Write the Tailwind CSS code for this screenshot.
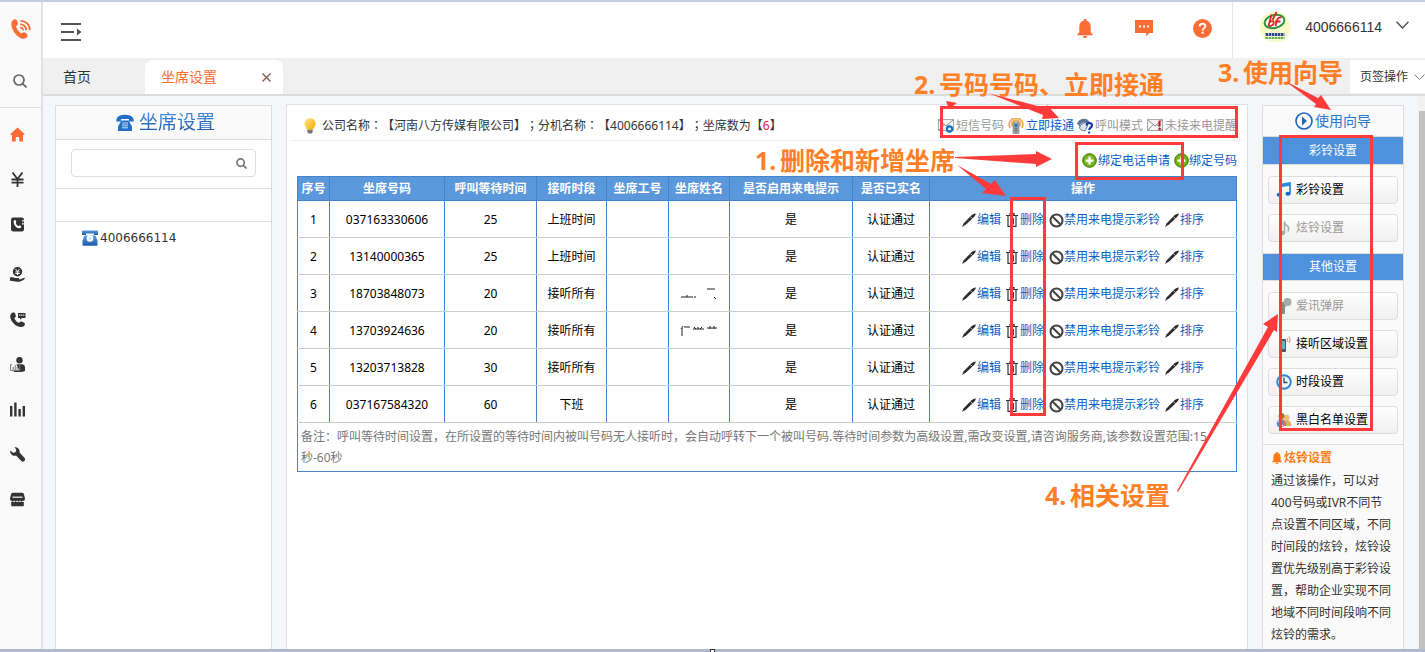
<!DOCTYPE html>
<html lang="zh-CN">
<head>
<meta charset="utf-8">
<title>坐席设置</title>
<script src="https://cdn.jsdelivr.net/npm/@tailwindcss/browser@4"></script>
</head>
<body class="relative flex h-screen flex-col overflow-hidden bg-[#f5f6fa] font-['Noto_Sans','Noto_Sans_CJK_SC',sans-serif] text-xs text-[#333] [text-spacing-trim:space-all]">
<svg class="absolute h-0 w-0" aria-hidden="true">
  <defs>
    <linearGradient id="bulbg" x1="0" y1="0" x2="1" y2="1"><stop offset="0" stop-color="#ffe98a"/><stop offset="1" stop-color="#f6a800"/></linearGradient>
    <linearGradient id="blueg" x1="0" y1="0" x2="0" y2="1"><stop offset="0" stop-color="#5a9be0"/><stop offset="1" stop-color="#1c59ab"/></linearGradient>
    <radialGradient id="greeng"><stop offset="0" stop-color="#a6d93a"/><stop offset="1" stop-color="#5ea30b"/></radialGradient>
  </defs>
  <symbol id="pen" viewBox="0 0 14 14"><path d="M0 14 1.500 10.500 9.500 2.300Q12 .2 13.800.4 13.800 2 12 4L4 11.500Z" fill="#2b2b2b"/><path d="M8.500 3.700l1.800 1.800" stroke="#fff" stroke-width=".8"/></symbol>
  <symbol id="trash" viewBox="0 0 12 14"><path d="M0 2.500h12M4 2V.7h4V2M2 3v10.300h8V3M4.700 5v6.500M7.300 5v6.500" fill="none" stroke="#333" stroke-width="1.200"/></symbol>
  <symbol id="ban" viewBox="0 0 16 16"><circle cx="8" cy="8" r="6.400" fill="none" stroke="#444" stroke-width="2.200"/><path d="M3.700 3.700l8.600 8.600" stroke="#444" stroke-width="2.200"/></symbol>
  <symbol id="plus" viewBox="0 0 16 16"><circle cx="8" cy="8" r="7.300" fill="url(#greeng)" stroke="#3f7a08"/><path d="M8 3.800v8.400M3.800 8h8.400" stroke="#fff" stroke-width="2.400"/></symbol>
  <symbol id="mail" viewBox="0 0 16 14"><rect x=".5" y="1.500" width="15" height="11" fill="#f4f4f4" stroke="#a9a9a9"/><path d="M1 2l7 6 7-6M1 12l5-5.300M15 12l-5-5.300" fill="none" stroke="#8d8d8d"/></symbol>
  <symbol id="bell" viewBox="0 0 16 20"><path d="M8 0a1.600 1.600 0 0 1 1.600 1.800C12.300 2.500 14 4.800 14 8v6l2 2v1H0v-1l2-2V8c0-3.200 1.700-5.500 4.400-6.200A1.600 1.600 0 0 1 8 0zM5.500 18h5a2.500 2 0 0 1-5 0z"/></symbol>
</svg>

<div class="h-[2px] shrink-0 bg-[#c5cde0]"></div>

<div class="flex min-h-0 flex-1">
  <nav class="flex w-[43px] shrink-0 flex-col border-r-2 border-[#e1e1e1] bg-[#fafafa] text-[#333]" aria-label="主菜单">
    <a href="#" aria-label="首页标志" class="flex h-[54px] items-center pl-[11px]">
      <svg class="h-5 w-5 text-[#fc6c35]" viewBox="0 0 20 20" fill="currentColor"><path d="M3 .6C4.500 0 5.800.5 6.200 2l.6 2.300c.2 1-.2 1.700-1 2.200-.7.500-.7 1.200-.3 2.200 1 2.200 2.300 3.900 4 5.200.8.600 1.400.5 2-.1.700-.7 1.600-.9 2.400-.3l2 1.500c1 .8 1 2 .2 3-1.400 1.900-3.900 2.300-6.600.9C5.300 16.700 1.900 12.600.6 7.200-.1 4 .600 1.600 3 .6z"/><path d="M9 8.600A2.500 2.500 0 0 1 12 11.500M9.300 5.300A5.700 5.700 0 0 1 15.200 11.300M9.500 1.800A9 9 0 0 1 18.700 11.100" fill="none" stroke="currentColor" stroke-width="1.800"/></svg>
    </a>
    <a href="#" aria-label="搜索" class="flex h-[52px] items-center border-b border-[#ddd] pb-[2px] pl-[13px]">
      <svg class="h-[14px] w-[14px]" viewBox="0 0 14 14" fill="none" stroke="#666" stroke-width="1.700"><circle cx="6" cy="6" r="5"/><path d="M9.600 9.600 13.500 13.500"/></svg>
    </a>
    <div class="flex flex-col pt-1 *:flex *:h-[45px] *:items-center *:pl-[10px]">
      <a href="#" aria-label="主页"><svg class="h-[15px] w-[15px]" viewBox="0 0 15 15" fill="#fc6c35"><path d="M7.500.5 14.500 7v1H13v6.500H9.200V10H5.800v4.500H2V8H.5V7z"/></svg></a>
      <a href="#" aria-label="费用"><svg class="h-[15px] w-[15px]" viewBox="0 0 15 15" fill="none" stroke="#333" stroke-width="1.800"><path d="M2.500.5 7.500 7l5-6.500M7.500 7v8M1.500 7.500h12M1.500 10.700h12"/></svg></a>
      <a href="#" aria-label="电话簿"><svg class="h-[15px] w-[15px]" viewBox="0 0 15 15"><rect x="1" y=".5" width="13" height="14" rx="2.200" fill="#333"/><path d="M4.300 3.200c1-.8 1.700.2 1.900 1.200.2.800-.7 1-.4 1.800.5 1.300 1.300 2.200 2.300 2.700.8.300 1-.6 1.800-.3 1 .4 1.800 1 1 1.900-1.300 1.500-4 .7-5.700-1.500C3.700 7.100 3 4.300 4.300 3.200z" fill="#fff"/><path d="M12 3.800h3M12 6.800h3" stroke="#fafafa" stroke-width="1.200"/></svg></a>
      <a href="#" aria-label="收款" class="mt-[5px]"><svg class="h-[15px] w-[15px]" viewBox="0 0 15 15"><circle cx="7.500" cy="4.800" r="4.700" fill="#333"/><path d="M5.500 2l2 2.500 2-2.500M7.500 4.500v3.600M5.300 4.900h4.400M5.300 6.500h4.400" stroke="#fafafa" fill="none"/><path d="M0 10.600c2-.6 3.500-.3 5 .4h3.500c.9 0 .9 1.200 0 1.200l2 .1 3.500-1.500c1-.2 1.200.6.500 1.100-2 1.600-4 2.900-7 2.900-3 0-4-.9-7.500-1z" fill="#333"/></svg></a>
      <a href="#" aria-label="通话"><svg class="h-4 w-4" viewBox="0 0 16 16" fill="#333"><path d="M3 .5c1.200-.4 2 .2 2.300 1.500l.5 1.700c.2.900-.2 1.400-.8 1.900-.5.400-.5.800-.1 1.600.8 1.500 1.800 2.600 3.200 3.400.7.400 1.100.3 1.500-.3.600-.8 1.300-1 2-.7l2.200 1c1.200.5 1.400 1.600.8 2.700-1 1.600-3 2.200-5.300 1.500C4.600 13.300 1.300 10 .4 5.400-.1 3 .8 1.200 3 .5z"/><path d="M8 1h7.500v5H12l-2 1.800V6H8z"/><path d="M9.200 3.200h5.200" stroke="#fff" stroke-width="1.200" stroke-dasharray="1.200 .8"/></svg></a>
      <a href="#" aria-label="客户"><svg class="h-[15px] w-[15px]" viewBox="0 0 15 15"><circle cx="9.500" cy="3.300" r="3.200" fill="#333"/><path d="M6.500 7.200h6q2.500.3 2.500 3V14q-2 1-5 1z" fill="#333"/><path d="M.6 7.700h1.500M.6 7.500v6h9.200V7.500H8.300M3.200 13V10M5.200 13V8M7.200 13V9.500" fill="none" stroke="#777"/><path d="M4 14.500h6" stroke="#333"/></svg></a>
      <a href="#" aria-label="统计"><svg class="h-[15px] w-[15px]" viewBox="0 0 15 15" fill="#333"><path d="M0 4h2.400v10.500H0zM4.200.5h2.400v14H4.200zM8.400 7h2.400v7.500H8.400zM12.600 4H15v10.500h-2.400z"/></svg></a>
      <a href="#" aria-label="工具"><svg class="h-[15px] w-[15px]" viewBox="0 0 15 15" fill="#333"><path d="M4.500.2C7.500-.3 10 2 9.600 5.500l5 5.500c1.500 2-1 4.700-3 3.200L6 8.600C3 9.600-.3 7 .2 3.500L3.300 6 6 4.800 6.200 2.500z"/></svg></a>
      <a href="#" aria-label="店铺"><svg class="h-[15px] w-[15px]" viewBox="0 0 15 15" fill="#333"><path d="M3 .8h9q1.500 0 1.900 1.400L15 6.500q0 2-1.500 2.500H1.500Q0 8.500 0 6.500L1.100 2.200Q1.500.8 3 .8z"/><path d="M2.500 5.200h10" stroke="#ddd" stroke-width="1.400"/><path d="M1.200 9.800q1.600-1 3.100 0 1.600-1 3.200 0 1.600-1 3.200 0 1.500-1 3.100 0v3.700q0 .8-.8.800H2q-.8 0-.8-.8z"/><path d="M0 9.300h15" stroke="#fafafa" stroke-width=".8" stroke-dasharray="2 1"/></svg></a>
    </div>
  </nav>

  <div class="flex min-w-0 flex-1 flex-col">
    <header class="flex h-[56px] shrink-0 items-center bg-white">
      <button type="button" aria-label="折叠菜单" class="ml-[18px] mt-1"><svg class="h-[18px] w-[21px]" viewBox="0 0 21 18"><path d="M0 1h20M0 9h13M0 17h20" stroke="#555" stroke-width="2"/><path d="M16 5.500 20.500 9 16 12.500z" fill="#555"/></svg></button>
      <div class="ml-auto flex items-center pb-1 text-[#fc6c35]">
        <button type="button" aria-label="通知" class="mr-[42px]"><svg class="h-[19px] w-4" fill="currentColor"><use href="#bell"/></svg></button>
        <button type="button" aria-label="消息" class="mr-[40px]"><svg class="h-[18px] w-[18px]" viewBox="0 0 18 18" fill="currentColor"><path d="M0 1h18v13h-3.500l-3.300 3.500V14H0z"/><path d="M4 7.500h2M8 7.500h2M12 7.500h2" stroke="#fff" stroke-width="2"/></svg></button>
        <button type="button" aria-label="帮助" class="mr-5"><svg class="h-[19px] w-[19px]" viewBox="0 0 19 19"><circle cx="9.500" cy="9.500" r="9.400" fill="currentColor"/><path d="M6.700 7.400c0-3.600 5.700-3.500 5.700-.3 0 2.100-2.800 2.100-2.800 4.300" fill="none" stroke="#fff" stroke-width="1.900"/><path d="M8.600 12.700h2v2h-2z" fill="#fff"/></svg></button>
      </div>
      <button type="button" class="flex h-full items-center border-l border-[#e8e8e8] pb-[6px] pl-[26px] pr-4 font-['Liberation_Sans',sans-serif] text-sm text-[#333]">
        <svg class="h-8 w-8" viewBox="0 0 32 32" aria-hidden="true"><circle cx="16" cy="16" r="15.500" fill="#fafac8"/><ellipse cx="15.500" cy="10.500" rx="10" ry="6.500" transform="rotate(-14 15.500 10.500)" fill="#fff" stroke="#2e9445" stroke-width="2"/><path d="M12.500 3.500 9.500 15M10.500 11.500c4-3 5.500 0 3 2.500-1.500 1.600-4 1.200-4 0M22.500 6.500c-4-.5-4.500 2-6 8.500M16 10.500h5.500M17.500 1 13.500 9" fill="none" stroke="#d9291c" stroke-width="1.800"/><path d="M6.500 23.500h19" stroke="#264b94" stroke-width="3" stroke-dasharray="2.500 .6"/><path d="M6.500 27h19" stroke="#5fae5c" stroke-width="2" stroke-dasharray="2.500 .6"/></svg>
        <span class="ml-[14px]">4006666114</span>
        <svg class="mb-1 ml-[14px] h-2 w-[13px]" viewBox="0 0 13 8" fill="none" stroke="#555" stroke-width="1.500"><path d="M.5.8 6.500 7 12.500.8"/></svg>
      </button>
    </header>

    <div class="flex h-[38px] shrink-0 items-stretch border-b-2 border-[#dcdcdc] bg-[#f0f0f0] pt-[2px] text-sm">
      <a href="#" class="flex w-[102px] items-center pl-5">首页</a>
      <div class="flex w-[138px] items-center justify-between rounded-t-lg bg-white pl-4 pr-3 text-[#fc6c35]">
        <a href="#" aria-current="page">坐席设置</a>
        <button type="button" aria-label="关闭"><svg class="h-[9px] w-[9px]" viewBox="0 0 9 9" stroke="#8a5a50" stroke-width="1.400"><path d="M.5.5l8 8M8.500.5l-8 8"/></svg></button>
      </div>
      <button type="button" class="mb-px ml-auto flex items-center whitespace-nowrap bg-white pl-[10px] text-xs">页签操作<svg class="ml-[6px] h-[6px] w-[11px]" viewBox="0 0 11 6" fill="none" stroke="#777"><path d="M.5.500 5.500 5.500 10.500.5"/></svg></button>
    </div>

    <div class="flex min-h-0 flex-1">
      <aside class="ml-3 mt-[9px] w-[217px] shrink-0 border border-b-0 border-[#ddd] bg-white">
        <h2 class="flex h-[34px] items-center justify-center gap-[5px] border-b border-[#ddd] bg-[#fafafa] pl-[4px] text-[19px]">
          <svg class="h-[18px] w-[18px]" viewBox="0 0 18 18" aria-hidden="true"><path d="M4 1.500Q9 0 14 1.500 18 3 17.800 7.500H13V5H5v2.500H.2Q0 3 4 1.500zM5.500 6.500h7l3.500 6V17H2v-4.500z" fill="#2470c8"/><path d="M6 9h6M6 11.200h6M6 13.400h6M7 8.500V15M9 8.500V15M11 8.500V15" stroke="#cfe0f5" stroke-width=".6"/></svg>
          <span class="bg-linear-to-b from-[#4a94e6] to-[#154f9e] bg-clip-text text-transparent">坐席设置</span>
        </h2>
        <form class="border-b border-[#ddd] px-[15px] pb-[11px] pt-[9px]">
          <label class="flex h-7 items-center rounded border border-[#ddd] bg-white pr-[8px]">
            <input type="search" aria-label="搜索坐席" class="h-full min-w-0 flex-1 bg-transparent px-2 outline-none">
            <svg class="h-[11px] w-[11px]" viewBox="0 0 11 11" fill="none" stroke="#777" stroke-width="1.700"><circle cx="4.600" cy="4.600" r="3.700"/><path d="M7.300 7.300 10.500 10.500"/></svg>
          </label>
        </form>
        <div class="h-[33px] border-b border-[#ddd]"></div>
        <a href="#" class="flex h-8 items-center gap-[2px] pl-[26px] font-['DejaVu_Sans',sans-serif]">
          <svg class="h-4 w-4" viewBox="0 0 16 16" aria-hidden="true"><path d="M1 .5h14q1 0 1 1V5h-4V3.500H4V5H0V1.500Q0 .5 1 .5z" fill="url(#blueg)"/><path d="M2.500 5.500h11l2 5V15q0 .8-.8.800H1.300Q.5 15.800.5 15v-4.500z" fill="url(#blueg)"/><circle cx="8" cy="8.500" r="3.300" fill="#fff"/><circle cx="8" cy="8.500" r="1.300" fill="#b9d5f2"/></svg>4006666114
        </a>
      </aside>

      <main class="ml-[14px] mt-2 flex min-w-0 flex-1 flex-col border border-b-0 border-[#e0e0e0] bg-white">
        <div class="mx-[5px] flex h-9 items-center border-b border-[#eee] pl-3 pr-[5px] pt-[6px]">
          <svg class="h-4 w-3" viewBox="0 0 12 16" aria-hidden="true"><path d="M6 .2a5.500 5.500 0 0 1 4.300 9C9.400 10.400 9 11 9 11.700H3C3 11 2.600 10.400 1.700 9.200A5.500 5.500 0 0 1 6 .2z" fill="url(#bulbg)"/><path d="M3.300 11.700h5.400V14L7.500 15.500h-3L3.300 14z" fill="#777"/></svg>
          <p class="ml-[6px] whitespace-nowrap">公司名称<span lang="zh-TW" class="font-['Noto_Sans_CJK_TC',sans-serif]">：</span>【河南八方传媒有限公司】<span lang="zh-TW" class="font-['Noto_Sans_CJK_TC',sans-serif]">；</span>分机名称<span lang="zh-TW" class="font-['Noto_Sans_CJK_TC',sans-serif]">：</span>【4006666114】<span lang="zh-TW" class="font-['Noto_Sans_CJK_TC',sans-serif]">；</span>坐席数为【<span class="text-[#f0142d]">6</span>】</p>
          <div class="ml-auto flex items-center gap-[2px] whitespace-nowrap text-[#999]">
            <svg class="h-4 w-4" viewBox="0 0 16 16" aria-hidden="true"><use href="#mail" width="16" height="14"/><circle cx="11.500" cy="11" r="2.600" fill="none" stroke="#1479bd" stroke-width="2.200"/></svg>
            <a href="#" class="mr-[2px]">短信号码</a>
            <svg class="h-4 w-4" viewBox="0 0 16 16" aria-hidden="true"><path d="M2 10A6.800 6.800 0 1 1 14 10M4.500 8a4 4 0 1 1 7 0" fill="none" stroke="#f2a850" stroke-width="1.700"/><rect x="5" y="4" width="6" height="12" rx="1.500" fill="#a9a9a9" stroke="#777" stroke-width=".6"/><path d="M6.500 5.700h3v3.500h-3z" fill="#2a74c9"/><path d="M6.500 11h3M6.500 13h3" stroke="#555"/></svg>
            <a href="#" class="mr-px text-[#0a5fc4]">立即接通</a>
            <svg class="h-4 w-4" viewBox="0 0 16 16" aria-hidden="true"><path d="M0 5.500Q2 .5 8 .7q3 .3 4.500 3L10 6 7.500 4 3.500 6 3 8.500z" fill="#5d7694"/><path d="M3.500 7 8.500 4l2 4L8 13q-4 0-5.500-3z" fill="#dce6f0" stroke="#5d7694"/><path d="M9.500 7.500c.5-3.500 5.500-3 5.500 0 0 2-2.800 2.200-2.800 4.500M11.200 14.500h2" fill="none" stroke="#1439a0" stroke-width="2.100"/></svg>
            <a href="#" class="mr-[2px]">呼叫模式</a>
            <svg class="h-4 w-4" viewBox="0 0 16 16" aria-hidden="true"><use href="#mail" width="16" height="14"/><path d="M12.500 2.500v6M12.500 10v2.300" stroke="#cf1616" stroke-width="2.200"/></svg>
            <a href="#">未接来电提醒</a>
          </div>
        </div>

        <div class="flex h-[35px] items-center justify-end gap-[2px] pr-[10px] pt-1 text-[#0a5fc4]">
          <a href="#" class="mr-[2px] flex items-center gap-px"><svg class="h-[15px] w-[15px]"><use href="#plus"/></svg>绑定电话申请</a>
          <a href="#" class="flex items-center"><svg class="h-[15px] w-[15px]"><use href="#plus"/></svg>绑定号码</a>
        </div>

        <div class="px-[10px]">
        <table class="w-full table-fixed border-collapse border border-[#4a86c5] text-center text-black">
          <colgroup><col class="w-8"><col class="w-[115px]"><col class="w-[92px]"><col class="w-[70px]"><col class="w-[62px]"><col class="w-[61px]"><col class="w-[123px]"><col class="w-[77px]"><col></colgroup>
          <thead>
            <tr class="h-6 bg-[#5b97db] text-white *:border *:border-[#4584c8] *:p-0 *:font-bold">
              <th>序号</th><th>坐席号码</th><th>呼叫等待时间</th><th>接听时段</th><th>坐席工号</th><th>坐席姓名</th><th>是否启用来电提示</th><th>是否已实名</th><th>操作</th>
            </tr>
          </thead>
          <tbody id="rows"></tbody>
          <tfoot>
            <tr><td colspan="9" class="h-[49px] border border-[#4a86c5] border-t-[#ccc] px-[3px] pr-6 py-0 text-left leading-[21px] text-[#777]">备注：呼叫等待时间设置，在所设置的等待时间内被叫号码无人接听时，会自动呼转下一个被叫号码.等待时间参数为高级设置,需改变设置,请咨询服务商,该参数设置范围:15秒-60秒</td></tr>
          </tfoot>
        </table>
        </div>
      </main>

      <aside class="ml-[14px] mr-[14px] mt-[9px] w-[142px] shrink-0 border border-b-0 border-[#ddd] bg-[#fafafa]">
        <a href="#" class="flex h-[31px] items-center justify-center gap-[2px] border-b border-[#ddd] text-sm text-[#2878cc]">
          <svg class="h-[18px] w-[18px]" viewBox="0 0 18 18" aria-hidden="true"><circle cx="9" cy="9" r="8" fill="none" stroke="#1f65bb" stroke-width="1.600"/><path d="M7 4.500 12 9 7 13.500z" fill="#1f65bb"/></svg>使用向导
        </a>
        <h3 class="flex h-[27px] items-center justify-center bg-[#4e91dc] text-white">彩铃设置</h3>
        <div class="flex flex-col gap-[10px] border-y border-[#ddd] px-[5px] pb-[11px] pt-[11px] *:flex *:h-7 *:items-center *:gap-1 *:rounded *:border *:border-[#ddd] *:bg-linear-to-b *:from-white *:to-[#f1efef] *:pl-[7px] *:text-black">
          <button type="button"><svg class="h-4 w-4" viewBox="0 0 16 16" aria-hidden="true"><path d="M5 12.500V2.500l9-1.500v10.500" fill="none" stroke="#2a8ce8" stroke-width="1.800"/><path d="M5 2.500 14 1v2.800L5 5.300z" fill="#2a8ce8"/><ellipse cx="3.200" cy="12.800" rx="2.600" ry="2" fill="#1668c8"/><ellipse cx="12" cy="11.800" rx="2.600" ry="2" fill="#1668c8"/></svg>彩铃设置</button>
          <button type="button" disabled><svg class="h-4 w-4" viewBox="0 0 16 16" aria-hidden="true"><path d="M8.500 13V1.500q0 3 3 4.500 2 2 .5 5.500" fill="none" stroke="#aaa" stroke-width="1.600"/><ellipse cx="6.500" cy="13" rx="2.600" ry="2.200" fill="#aaa"/></svg><span class="text-[#999]">炫铃设置</span></button>
        </div>
        <h3 class="flex h-[26px] items-center justify-center bg-[#4e91dc] text-white">其他设置</h3>
        <div class="flex flex-col gap-[10px] border-y border-[#ddd] px-[5px] pb-[10px] pt-[11px] *:flex *:h-7 *:items-center *:gap-1 *:whitespace-nowrap *:rounded *:border *:border-[#ddd] *:bg-linear-to-b *:from-white *:to-[#f1efef] *:pl-[7px] *:text-black">
          <button type="button" disabled><svg class="h-4 w-4" viewBox="0 0 16 16" aria-hidden="true"><rect x="3" y="4" width="6" height="12" rx="1" fill="#8a8a8a"/><circle cx="11.500" cy="4" r="4" fill="#aaa"/><path d="M9 7.500 8 10l3-2" fill="#aaa"/></svg><span class="text-[#999]">爱讯弹屏</span></button>
          <button type="button"><svg class="h-4 w-4" viewBox="0 0 16 16" aria-hidden="true"><rect x="3" y="3" width="7" height="13" rx="1" fill="#555"/><path d="M4 5h5v8H4z" fill="#5ab6c9"/><path d="M11 2q1.500 2 0 4M13 .5q2.500 3.300 0 6.500" fill="none" stroke="#e88b80"/></svg>接听区域设置</button>
          <button type="button"><svg class="h-4 w-4" viewBox="0 0 16 16" aria-hidden="true"><circle cx="8" cy="8" r="6.800" fill="#eef6ff" stroke="#3487da" stroke-width="2"/><path d="M8 3.500V8.500h3.500" fill="none" stroke="#3b4b66" stroke-width="1.300"/></svg>时段设置</button>
          <button type="button"><svg class="h-4 w-4" viewBox="0 0 16 16" aria-hidden="true"><circle cx="10.500" cy="5.500" r="3" fill="#e9c17c"/><path d="M7 14q0-6 4-6t4.500 6z" fill="#dfb062"/><circle cx="5.500" cy="4" r="3" fill="#b8702c"/><path d="M1 14q0-7 4.500-7T10 14z" fill="#cc7a35"/><circle cx="4.500" cy="11.500" r="3.800" fill="#5e8fd4"/><path d="M2 9l5 5" stroke="#fff"/></svg>黑白名单设置</button>
        </div>
        <section class="pl-2 pr-[10px] pt-[2px] leading-[22px]">
          <h4 class="flex items-center gap-px font-bold text-[#ff7a14]"><svg class="h-3 w-3" fill="currentColor" aria-hidden="true"><use href="#bell"/></svg>炫铃设置</h4>
          <p class="pt-px">通过该操作，可以对400号码或IVR不同节点设置不同区域，不同时间段的炫铃，炫铃设置优先级别高于彩铃设置，帮助企业实现不同地域不同时间段响不同炫铃的需求。</p>
        </section>
      </aside>
      <div class="w-[7px] shrink-0 bg-[#f1f1f1] pl-px pt-[15px]"><div class="h-full bg-[#c1c1c1]"></div></div>
    </div>
  </div>
</div>

<div class="flex h-[3px] shrink-0 justify-center bg-[#b0b9cc]"><div class="h-full w-[5px] border border-b-0 border-[#333] bg-white"></div></div>

<!-- Guide annotations drawn over the page -->
<div class="pointer-events-none absolute inset-0 text-[25px] font-bold leading-none text-[#ff7f27]">
  <svg class="absolute left-0 top-0 z-10 h-[652px] w-[1425px]" viewBox="0 0 1425 652" aria-hidden="true">
    <g fill="none" stroke="#fe3b3a" stroke-width="3"><path d="M941.500 107.500h295v29h-295zM1076.500 143.500h106v35h-106zM1011.500 198.500h33v216h-33zM1280.500 136.500h91v293h-91z"/></g>
    <g fill="#fe3b3a">
      <path d="M955 157 1036 154V151L1052 159 1036 167V164L955 158z"/>
      <path d="M957 165 991 184 995 180 1006 196 982 193 986 189z"/>
      <path d="M988 93 1045 108 1047 105 1059 118 1042 119 1043 115z"/>
      <path d="M946 101 957 103 949 109z"/>
      <path d="M1285 81 1318 98 1321 95 1331 110 1314 107 1316 104z"/>
      <path d="M1177 491 1268 327 1263 324 1278 314 1277 332 1274 330 1178 492z"/>
    </g>
  </svg>
  <p class="absolute left-[755px] top-[148px] flex"><span class="w-[25px]">1.</span>删除和新增坐席</p>
  <p class="absolute left-[914px] top-[72px] flex"><span class="w-[25px]">2.</span>号码号码、立即接通</p>
  <p class="absolute left-[1218px] top-[60px] flex"><span class="w-[25px]">3.</span>使用向导</p>
  <p class="absolute left-[1045px] top-[483px] flex"><span class="w-[25px]">4.</span>相关设置</p>
</div>

<script>
  // Partly erased names keep only a few stroke remains
  const marks = {
    3: 'M1 9h12M7 7v2M14 9h2M27 1h8M34 9l2 2',
    4: 'M3 1 1 4M2 3v8M4 2h6M14 2l2 2M18 2v2M22 2l-2 2M13 4h11M27 3h10M30 1v3M34 1v3'
  };
  const data = [
    ['037163330606', 25, '上班时间'], ['13140000365', 25, '上班时间'], ['18703848073', 20, '接听所有'],
    ['13703924636', 20, '接听所有'], ['13203713828', 30, '接听所有'], ['037167584320', 60, '下班']
  ];
  document.getElementById('rows').innerHTML = data.map((r, i) => `
    <tr class="h-[37px] *:border-x *:border-b *:border-x-[#4584c8] *:border-b-[#ccc] *:px-0 *:pb-0 *:pt-[2px]">
      <td>${i + 1}</td><td>${r[0]}</td><td>${r[1]}</td><td>${r[2]}</td><td></td>
      <td>${marks[i + 1] ? `<svg class="mx-auto h-3 w-[38px]" viewBox="0 0 38 12" fill="none" stroke="#222"><path d="${marks[i + 1]}"/></svg>` : ''}</td>
      <td>是</td><td>认证通过</td>
      <td><div class="flex items-center justify-center gap-[5px] whitespace-nowrap text-[#0a5fc4]">
        <a href="#" class="flex items-center gap-px"><svg class="h-[14px] w-[14px]"><use href="#pen"/></svg>编辑</a>
        <a href="#" class="flex items-center gap-[2px]"><svg class="h-[14px] w-3"><use href="#trash"/></svg>删除</a>
        <a href="#" class="flex items-center"><svg class="h-[15px] w-[15px]"><use href="#ban"/></svg>禁用来电提示彩铃</a>
        <a href="#" class="flex items-center gap-px"><svg class="h-[14px] w-[14px]"><use href="#pen"/></svg>排序</a>
      </div></td>
    </tr>`).join('');
</script>
</body>
</html>
